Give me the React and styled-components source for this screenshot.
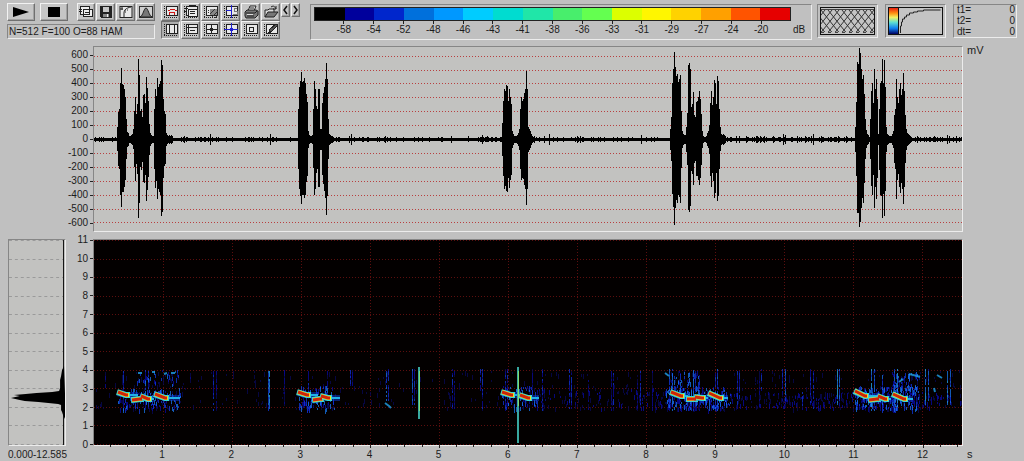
import React from 'react';
import styled, { createGlobalStyle } from 'styled-components';

const GlobalStyle = createGlobalStyle`
  body {
    margin: 0;
    background: #c0c0c0;
    color: #1c1c1c;
    font-family: "Liberation Sans", Arial, sans-serif;
    font-size: 10px;
    line-height: 14px;
  }
`;

const Toolbar = styled.header`
  display: flex;
  align-items: flex-start;
  padding: 3px 7px 0;
  height: 37px;
`;

const Sunken = styled.div`
  box-sizing: border-box;
  border: 1px solid;
  border-color: #868686 #ececec #ececec #868686;
`;

const Playback = styled.div`
  width: 148px;
  margin-right: 6px;
`;

const ButtonRow = styled.div`
  display: flex;
  gap: 1px;
`;

const ToolButton = styled.button`
  box-sizing: border-box;
  display: flex;
  align-items: center;
  justify-content: center;
  width: ${({ $wide }) => ($wide ? '28px' : '19px')};
  height: 18px;
  padding: 0;
  margin-right: ${({ $gap }) => $gap || 0}px;
  background: ${({ $pressed }) => ($pressed ? '#adadad' : '#c6c6c6')};
  border: 1px solid;
  border-color: ${({ $pressed }) =>
    $pressed ? '#707070 #eee #eee #707070' : '#f2f2f2 #707070 #707070 #f2f2f2'};
  box-shadow: ${({ $pressed }) => ($pressed ? 'none' : 'inset -1px -1px #a2a2a2')};

  svg {
    display: block;
    width: 16px;
    height: 14px;
  }
`;

const ArrowButton = styled(ToolButton)`
  width: 9px;
  height: 14px;

  svg {
    width: 7px;
    height: 10px;
  }
`;

const Status = styled(Sunken)`
  height: 15px;
  margin-top: 3px;
  padding-left: 1px;
  line-height: 13px;
  white-space: nowrap;
`;

const Tools = styled.div`
  display: flex;
  gap: 1px;
  margin-right: 10px;
`;

const ScalePanel = styled(Sunken)`
  flex: 1;
  height: 36px;
  margin: 1px 5px 0 0;
  padding: 2px 20px 0 3px;
`;

const ColorBar = styled.div`
  display: flex;
  height: 12px;
  border: 1px solid #222;
`;

const Swatch = styled.div`
  flex: 1;
  background: ${({ $color }) => $color};
`;

const ScaleLabels = styled.div`
  display: flex;
  margin-right: -20px;
`;

const ScaleLabel = styled.span`
  flex: 1;
  position: relative;
  display: flex;
  justify-content: center;
  padding-top: 2px;

  &::before {
    content: '';
    position: absolute;
    top: 0;
    width: 1px;
    height: 3px;
    background: #222;
  }
`;

const HalfStep = styled.span`
  flex: 0.5;
`;

const Unit = styled.span`
  width: 18px;
  padding: 2px 0 0 2px;
`;

const Preview = styled(Sunken)`
  width: 61px;
  height: 34px;
  margin: 1px 7px 0 0;
  padding: 2px;

  > svg {
    display: block;
    width: 100%;
    height: 100%;
  }
`;

const TimeTable = styled.table`
  box-sizing: border-box;
  width: 64px;
  height: 34px;
  margin-top: 1px;
  border: 1px solid;
  border-color: #868686 #ececec #ececec #868686;
  border-spacing: 0;
  line-height: 10px;

  th,
  td {
    padding: 0 1px 0 3px;
    font-weight: normal;
    text-align: left;
  }

  td {
    text-align: right;
  }
`;

const Charts = styled.main`
  display: grid;
  grid-template-columns: 66px 27px 1fr 61px;
  grid-template-rows: 186px 207px auto;
  row-gap: 7px;
  padding-top: 6px;
`;

const Axis = styled.div`
  display: flex;
  flex-direction: column;
  justify-content: space-between;
  align-items: flex-end;
  margin: ${({ $bleed }) => ($bleed ? '-6px 0' : '2px 0 3px')};
  grid-column: ${({ $wide }) => ($wide ? '1 / 3' : '2')};
`;

const AxisLabel = styled.span`
  display: flex;
  align-items: center;
  gap: 2px;

  &::after {
    content: '';
    width: 3px;
    height: 1px;
    background: #222;
  }
`;

const Panel = styled(Sunken)`
  background: ${({ $dark }) => ($dark ? '#030000' : '#c2c2c0')};
  margin-left: ${({ $inset }) => $inset || 0}px;
  min-width: 0;

  svg {
    display: block;
    width: 100%;
    height: 100%;
  }
`;

const RightUnit = styled.span`
  padding-left: 4px;
  margin-top: ${({ $axis }) => ($axis ? '-6px' : '-3px')};
  font-size: 11px;
`;

const Range = styled.div`
  padding-left: 8px;
  white-space: nowrap;
  grid-column: 1 / 3;
  margin-top: -5px;
`;

const TimeAxis = styled.div`
  margin-top: -8px;

  svg {
    display: block;
    width: 100%;
    height: 3px;
  }
`;

const TimeLabels = styled.div`
  display: flex;
`;

const TimeLabel = styled.span`
  flex: ${({ $span }) => $span || 1} 1 0;
  min-width: 0;
  text-align: center;
`;

const COLORS = [
  '#000', '#00009c', '#0026cc', '#0070dc', '#0098ff', '#00ccff', '#00dcd0', '#20e6a8',
  '#48ee6c', '#64ff50', '#dcff00', '#fff600', '#ffd200', '#ffa000', '#ff5400', '#e60000',
];
const LEVELS = [-58, -54, -52, -48, -46, -43, -41, -38, -36, -33, -31, -29, -27, -24, -20];

const WIDTH = 868;
const DURATION = 12.585;
const SECOND = WIDTH / DURATION;

// small seeded generator so that every render gives the same signal
const createRandom = (start) => {
  let seed = start;
  return () => {
    seed = (seed * 1664525 + 1013904223) % 4294967296;
    return seed / 4294967296;
  };
};

// first column of each call, then its amplitude column by column
const BURSTS = [
  [23, [12, 27, 30, 56, 71, 55, 54, 50, 42, 20, 7, 6, 3, 3, 4, 5, 10, 28, 42, 25, 35, 80, 64, 28, 30, 22, 44, 45, 36, 62, 51, 38, 15, 6, 4, 3, 3, 30, 50, 43, 61, 52, 55, 58, 79, 74, 40, 28, 25, 6, 4, 3, 4, 3, 4, 3]],
  [204, [30, 52, 58, 67, 57, 58, 61, 56, 45, 37, 8, 4, 3, 3, 4, 30, 58, 50, 33, 30, 50, 50, 10, 10, 36, 46, 52, 60, 76, 60, 20, 5, 4, 3, 3, 2]],
  [408, [16, 38, 50, 48, 54, 53, 38, 50, 42, 35, 8, 5, 3, 3, 3, 4, 6, 10, 30, 42, 38, 40, 46, 50, 68, 50, 12, 10, 8, 5, 3, 2, 3]],
  [576, [10, 22, 56, 70, 87, 72, 63, 65, 57, 60, 64, 28, 8, 5, 4, 4, 12, 26, 74, 76, 70, 32, 35, 47, 24, 22, 37, 38, 42, 48, 40, 25, 8, 3, 2, 2, 3, 6, 8, 14, 36, 48, 34, 42, 59, 56, 35, 63, 58, 30, 12, 5, 4, 5, 4, 3]],
  [761, [12, 37, 77, 75, 91, 86, 70, 60, 64, 45, 20, 9, 5, 4, 2, 20, 48, 56, 36, 70, 50, 60, 40, 5, 30, 56, 58, 80, 56, 79, 52, 12, 5, 4, 3, 3, 3, 5, 8, 24, 30, 60, 42, 36, 50, 56, 44, 50, 66, 48, 24, 10, 6, 5, 4, 3]],
];

const CLICKS = [90, 116, 176, 255, 257, 357, 388, 450, 455, 483, 486, 547, 601, 645, 689, 691, 717, 719, 744, 853, 855];

const buildWave = () => {
  const random = createRandom(7);
  const amp = Array.from({ length: WIDTH }, (_, x) => {
    const edge = x > 640 ? 1.4 : 1;
    return 0.7 + random() * random() * 2.2 * edge;
  });
  CLICKS.forEach((x) => {
    amp[x] = 3 + (x % 3);
  });
  BURSTS.forEach(([start, values]) => {
    values.forEach((value, i) => {
      amp[start + i] = Math.max(value, amp[start + i]);
    });
  });
  return amp
    .map((a, x) => {
      const top = Math.round(92 - a);
      const bottom = Math.round(93 + a * (0.94 + random() * 0.05));
      return `M${x} ${top}h1V${bottom}h-1z`;
    })
    .join('');
};

const STREAKS = [
  [11, 132, 148, 1], [29, 131, 170, 2], [51, 130, 170, 2], [54, 131, 168, 2], [96, 131, 145, 1],
  [119, 131, 170, 2], [122, 131, 170, 1], [139, 131, 140, 0], [160, 131, 142, 0], [174, 131, 170, 3], [175, 131, 170, 4],
  [190, 130, 165, 1], [214, 131, 170, 2], [233, 131, 168, 1], [256, 130, 145, 2], [258, 130, 145, 1],
  [292, 129, 160, 3], [294, 129, 160, 2], [318, 129, 165, 3], [320, 129, 165, 2], [358, 129, 170, 2],
  [360, 131, 170, 1], [386, 129, 150, 2], [388, 129, 170, 2], [411, 129, 170, 2], [413, 129, 160, 2],
  [438, 129, 165, 1], [448, 129, 170, 2], [475, 129, 168, 2], [477, 131, 165, 2], [494, 140, 170, 1],
  [517, 131, 170, 1], [519, 131, 170, 2], [543, 135, 170, 1], [546, 131, 165, 2], [558, 131, 170, 1],
  [575, 129, 170, 3], [578, 129, 170, 3], [599, 131, 170, 3], [601, 131, 170, 2], [605, 135, 170, 2],
  [621, 133, 170, 2], [623, 129, 170, 3], [643, 131, 168, 2], [645, 131, 160, 2], [665, 131, 165, 1],
  [667, 129, 150, 2], [688, 129, 160, 2], [691, 129, 160, 3], [708, 150, 170, 2], [716, 129, 165, 2],
  [719, 131, 168, 2], [743, 129, 165, 4], [745, 129, 160, 3], [777, 129, 170, 4], [780, 129, 170, 3],
  [788, 135, 172, 3], [800, 129, 170, 3], [803, 129, 170, 4], [831, 129, 165, 4], [834, 129, 160, 3],
  [853, 131, 165, 4], [856, 129, 165, 3],
];

// left, right, top, bottom, number of specks, brightest tone
const NOISE = [
  [24, 86, 148, 169, 190, 3], [43, 84, 130, 144, 50, 3], [204, 240, 146, 169, 130, 3],
  [408, 444, 146, 168, 100, 3], [571, 636, 146, 169, 260, 3], [575, 605, 130, 150, 70, 3],
  [761, 824, 146, 169, 260, 3], [797, 826, 132, 150, 70, 3], [546, 868, 152, 168, 380, 1],
  [640, 868, 130, 160, 90, 0], [0, 540, 131, 168, 190, 0], [438, 570, 148, 168, 80, 1],
];

const TONES = ['#080858', '#0a0aa4', '#1038e0', '#1878f0', '#28b0f8', '#48dcf4'];

const buildSpecks = () => {
  const random = createRandom(21);
  const paths = TONES.map(() => '');
  const add = (tone, x, y, h) => {
    paths[tone] += `M${Math.round(x)} ${Math.round(y)}h1v${h}h-1z`;
  };
  NOISE.forEach(([left, right, top, bottom, count, max]) => {
    for (let i = 0; i < count; i += 1) {
      const x = left + random() * (right - left);
      const y = top + random() * (bottom - top);
      add(Math.floor(random() * (max + 1)), x, y, 2 + Math.floor(random() * 4));
    }
  });
  STREAKS.forEach(([x, top, bottom, level]) => {
    for (let y = top; y < bottom; y += 2) {
      if (random() > 0.1) {
        add(Math.max(0, level - Math.floor(random() * 2.2)), x, y, 2);
      }
    }
  });
  return paths;
};

// core stroke of each syllable and the end of its fading tail
const CHIRPS = [
  [25, 153, 32, 155, 44], [39, 161, 46, 159, 47], [48, 157, 54, 159, 60], [62, 155, 71, 158, 86],
  [205, 153, 213, 155, 224], [220, 161, 226, 159, 228], [228, 157, 234, 158, 246],
  [409, 153, 417, 155, 425], [427, 156, 434, 158, 445],
  [578, 153, 587, 156, 594], [594, 160, 600, 159, 602], [602, 158, 608, 158, 614], [616, 154, 626, 158, 634],
  [762, 152, 771, 156, 784], [776, 161, 783, 159, 784], [785, 157, 791, 159, 797], [800, 155, 810, 159, 819],
];

const WAVE = buildWave();
const SPECKS = buildSpecks();

const Frame = ({ children }) => (
  <svg viewBox="0 0 16 14" shapeRendering="crispEdges" aria-hidden="true">
    <rect x="3.5" y="1.5" width="11" height="9" fill="#e8e8e8" stroke="#222" />
    <path d="M1.5 1v11M1 12.5h14" fill="none" stroke="#222" strokeDasharray="1 1" />
    {children}
  </svg>
);

const ICONS = {
  copy: (
    <svg viewBox="0 0 16 14" shapeRendering="crispEdges">
      <path d="M2.5 1.5h9v8h-9zM5.5 4.5h9v7h-9z" fill="#eee" stroke="#222" />
      <path d="M7 7.5h5M7 9.5h5M1 4.5h3M1 6.5h3" stroke="#222" />
    </svg>
  ),
  save: (
    <svg viewBox="0 0 16 14" shapeRendering="crispEdges">
      <path d="M2 1h12v12H3l-1-1z" fill="#222" />
      <path d="M5 2h6v5H5z" fill="#c8c8c8" />
      <path d="M5 9h6v3H5z" fill="#888" />
      <path d="M9 9h1v3H9z" fill="#eee" />
    </svg>
  ),
  curve: (
    <svg viewBox="0 0 16 14">
      <rect x="2" y="1.5" width="12" height="11" fill="#e8e8e8" stroke="#222" />
      <path d="M2 4h3M4 2v3M6 12V8c0-3 2-5 7-6" fill="none" stroke="#222" />
      <path d="M7 5h1M9 5h1M7 7h1" stroke="#222" />
    </svg>
  ),
  window: (
    <svg viewBox="0 0 16 14">
      <rect x="1.5" y="1.5" width="13" height="11" fill="#d0d0d0" stroke="#333" />
      <path d="M2 12C5 11 6 3 8 3s3 8 6 9z" fill="#777" stroke="#222" />
    </svg>
  ),
  region: (
    <Frame>
      <path d="M7 4.5h5M5 5.5h2M12 5.5h2M6 7.5h6M6.5 8v2M11.5 8v2" fill="none" stroke="#d01818" />
    </Frame>
  ),
  page: (
    <Frame>
      <path d="M5.5 4.5h9v7h-9z" fill="#eee" stroke="#222" />
      <path d="M1 3.5h4M1 6.5h3M7 6.5h5M7 8.5h5M6 0.5h7" fill="none" stroke="#222" />
    </Frame>
  ),
  hatch: (
    <Frame>
      <path d="M7 4h7v6H7z" fill="#888" />
      <path d="M7 9l5-5M9 12l6-6M5 5h1M5 7h1M12 13l3-3" stroke="#333" />
    </Frame>
  ),
  marker: (
    <Frame>
      <path d="M8.5 0v13M3 5.5h5" stroke="#2020d0" />
      <path d="M14 3.5h-3v3h3v3h-4" fill="none" stroke="#777" />
    </Frame>
  ),
  print: (
    <svg viewBox="0 0 16 14">
      <path d="M5 6l2-5h6l-2 5" fill="#eee" stroke="#222" />
      <path d="M2 7l2-2h9l2 1v4l-3 3H3l-1-2z" fill="#777" stroke="#222" />
      <path d="M3 8h9l2-2M4 11h7M7 3h4" stroke="#222" fill="none" />
      <path d="M4 9.5h6" stroke="#ddd" />
    </svg>
  ),
  open: (
    <svg viewBox="0 0 16 14">
      <path d="M2 12V5h3l1-1h5v3" fill="#ddd" stroke="#222" />
      <path d="M2 12l3-5h10l-4 5z" fill="#777" stroke="#222" />
      <path d="M8 2c3-2 4 0 5 2M13 1v3h-3" fill="none" stroke="#222" />
    </svg>
  ),
  columns: (
    <Frame>
      <path d="M6.5 1v10M11.5 1v10" stroke="#222" />
    </Frame>
  ),
  rows: (
    <Frame>
      <path d="M3 4.5h11M5.5 2v9M7 7.5h5" stroke="#222" />
    </Frame>
  ),
  cross: (
    <Frame>
      <path d="M8.5 1v10M4 6.5h10M7 5.5h3M7 7.5h3" stroke="#222" />
    </Frame>
  ),
  crossBlue: (
    <Frame>
      <path d="M8.5 0v13M1 6.5h14M7 5.5h3M7 7.5h3" stroke="#2020d0" />
    </Frame>
  ),
  box: (
    <Frame>
      <path d="M6.5 4.5h4v4h-4z" fill="none" stroke="#222" />
    </Frame>
  ),
  edit: (
    <Frame>
      <path d="M6 9l1-3 6-5 2 1-6 6z" fill="#555" stroke="#222" />
      <path d="M5 9.5h3" stroke="#222" />
    </Frame>
  ),
};

const MAIN_TOOLS = [['copy', 'Copy'], ['save', 'Save'], ['curve', 'Transfer curve'], ['window', 'Window']];

const VIEW_TOOLS = [
  [['region', 'Region'], ['page', 'Page'], ['hatch', 'Hatch'], ['marker', 'Marker'], ['print', 'Print'], ['open', 'Open']],
  [['columns', 'Columns'], ['rows', 'Rows'], ['cross', 'Crosshair'], ['crossBlue', 'Blue crosshair'], ['box', 'Box'], ['edit', 'Edit']],
];

const TIMES = [['t1=', 0], ['t2=', 0], ['dt=', 0]];

const range = (from, to, step) => {
  const values = [];
  for (let v = from; step > 0 ? v <= to : v >= to; v += step) {
    values.push(v);
  }
  return values;
};

const ColorScale = () => (
  <ScalePanel>
    <ColorBar>
      {COLORS.map((color) => (
        <Swatch key={color} $color={color} />
      ))}
    </ColorBar>
    <ScaleLabels>
      <HalfStep />
      {LEVELS.map((level) => (
        <ScaleLabel key={level}>{level}</ScaleLabel>
      ))}
      <HalfStep />
      <Unit>dB</Unit>
    </ScaleLabels>
  </ScalePanel>
);

const WindowPreview = () => (
  <Preview>
    <svg viewBox="0 0 55 28" preserveAspectRatio="none" aria-hidden="true">
      <rect x="0.5" y="0.5" width="54" height="27" fill="#c4c4c4" stroke="#111" />
      <path d="M1 2.5h53" stroke="#444" />
      <path d="M1 25.5h53" stroke="#444" strokeDasharray="3 4" />
      <svg x="1" y="3" width="53" height="22" viewBox="0 0 53 22">
        {range(-14, 53, 7).map((x) => (
          <path
            key={x}
            d={`M${x} 0L${x + 16} 20q1 2 2 2M${x} 22q1 0 2-2L${x + 18} 0`}
            fill="none"
            stroke="#333"
          />
        ))}
      </svg>
    </svg>
  </Preview>
);

const CurvePreview = () => (
  <Preview>
    <svg viewBox="0 0 55 28" preserveAspectRatio="none" aria-hidden="true">
      <defs>
        <linearGradient id="heat" x1="0" y1="0" x2="0" y2="1">
          <stop offset="0" stopColor="#e82010" />
          <stop offset="0.2" stopColor="#ff9010" />
          <stop offset="0.36" stopColor="#f4f060" />
          <stop offset="0.55" stopColor="#60e0d0" />
          <stop offset="0.78" stopColor="#1080f0" />
          <stop offset="1" stopColor="#000060" />
        </linearGradient>
      </defs>
      <rect x="0.5" y="0.5" width="54" height="27" fill="#c4c4c4" stroke="#111" />
      <rect x="1" y="1" width="9" height="26" fill="url(#heat)" />
      <path d="M10.5 1v26" stroke="#111" />
      <path
        d="M12.5 26v-7h1v-4h1v-3h2v-2h2v-2h3v-2h4v-1h4v-1h6v-1h17"
        fill="none"
        stroke="#222"
      />
    </svg>
  </Preview>
);

const Waveform = () => (
  <svg viewBox="0 0 868 184" preserveAspectRatio="none" shapeRendering="crispEdges" role="img" aria-label="Waveform">
    {range(-6, 6, 1).map((n) => (
      <path key={n} d={`M0 ${Math.round(92 + n * 13.9)}.5H868`} stroke="#b84040" strokeDasharray="1 2" />
    ))}
    <path d={WAVE} fill="#000" />
  </svg>
);

const Spectrogram = () => (
  <svg viewBox="0 0 868 205" preserveAspectRatio="none" role="img" aria-label="Spectrogram">
    <g stroke="#5c0e0e" strokeDasharray="1 2" shapeRendering="crispEdges">
      {range(0, 11, 1).map((f) => (
        <path key={f} d={`M0 ${Math.round(204 - f * 18.55)}.5H868`} />
      ))}
      {range(1, 12, 1).map((t) => (
        <path key={t} d={`M${Math.round(t * SECOND)}.5 0V205`} />
      ))}
    </g>
    {SPECKS.map((d, i) => (
      <path key={TONES[i]} d={d} fill={TONES[i]} opacity="0.75" />
    ))}
    <path d="M291 163l4 3 2 2M571 133l4 3M805 142l4-3M815 134l8 2 3 1M843 135l5 3M840 148l1 4M44 133h4M58 132h3M70 134l3-1M77 133h4" stroke="#20a0e8" strokeWidth="2" fill="none" opacity="0.8" />
    <g fill="none">
      {CHIRPS.map(([x1, y1, x2, y2, tail]) => (
        <g key={x1}>
          <path d={`M${x1 - 2} ${y1}L${x2} ${y2}H${tail}`} stroke="#1040d8" strokeWidth="6" opacity="0.5" />
          <path d={`M${x2} ${y2}H${tail}`} stroke="#20b0e8" strokeWidth="2" />
          <path d={`M${x1 - 2} ${y1 - 1}L${x2} ${y2}h4`} stroke="#38d8d0" strokeWidth="6" />
          <path d={`M${x1 - 1} ${y1 - 1}L${x2} ${y2}h3`} stroke="#f0d828" strokeWidth="4" />
        </g>
      ))}
      {CHIRPS.map(([x1, y1, x2, y2]) => (
        <path key={x1} d={`M${x1 - 1} ${y1 - 1}L${x2} ${y2}h2`} stroke="#cc2408" strokeWidth="3" />
      ))}
    </g>
    <path d="M324 127h2v52h-2zM423 127h2v76h-2z" fill="#38a8a0" />
    <path d="M325 131h1v40h-1zM424 131h1v35h-1z" fill="#80dc70" />
  </svg>
);

const Spectrum = () => (
  <svg viewBox="0 0 57 205" preserveAspectRatio="none" role="img" aria-label="Average spectrum">
    {range(0, 11, 1).map((f) => (
      <path key={f} d={`M0 ${Math.round(204 - f * 18.55)}.5H55`} stroke="#999" strokeDasharray="3 3" />
    ))}
    <path d="M55 0h1v205h-1z" fill="#111" />
    <path
      d="M56 126l-2 4-1 6-1 4v8l-1 3-7 1-16 1-11 1-12 1 6 1-9 2 9 2 5 1 14 1 10 1 10 1 3 1v5l1 2 1 3 3 6z"
      fill="#000"
    />
  </svg>
);

const App = () => (
  <>
    <GlobalStyle />
    <Toolbar>
      <Playback>
        <ButtonRow>
          <ToolButton $wide $gap={4} aria-label="Play">
            <svg viewBox="0 0 16 14">
              <path d="M0 2l16 5-16 5z" />
            </svg>
          </ToolButton>
          <ToolButton $wide $gap={8} aria-label="Stop">
            <svg viewBox="0 0 16 14">
              <path d="M2 2h12v10H2z" />
            </svg>
          </ToolButton>
          {MAIN_TOOLS.map(([icon, label]) => (
            <ToolButton key={icon} aria-label={label}>
              {ICONS[icon]}
            </ToolButton>
          ))}
        </ButtonRow>
        <Status>N=512 F=100 O=88 HAM</Status>
      </Playback>
      <Tools>
        <div>
          {VIEW_TOOLS.map((row) => (
            <ButtonRow key={row[0][0]}>
              {row.map(([icon, label]) => (
                <ToolButton key={icon} $pressed={icon === 'columns'} aria-label={label}>
                  {ICONS[icon]}
                </ToolButton>
              ))}
            </ButtonRow>
          ))}
        </div>
        <ButtonRow>
          <ArrowButton aria-label="Previous">
            <svg viewBox="0 0 7 10">
              <path d="M5 1L2 5l3 4" fill="none" stroke="#111" strokeWidth="1.5" />
            </svg>
          </ArrowButton>
          <ArrowButton aria-label="Next">
            <svg viewBox="0 0 7 10">
              <path d="M2 1l3 4-3 4" fill="none" stroke="#111" strokeWidth="1.5" />
            </svg>
          </ArrowButton>
        </ButtonRow>
      </Tools>
      <ColorScale />
      <WindowPreview />
      <CurvePreview />
      <TimeTable>
        <tbody>
          {TIMES.map(([name, value]) => (
            <tr key={name}>
              <th scope="row">{name}</th>
              <td>{value}</td>
            </tr>
          ))}
        </tbody>
      </TimeTable>
    </Toolbar>

    <Charts>
      <Axis $wide>
        {range(600, -600, -100).map((value) => (
          <AxisLabel key={value}>{value}</AxisLabel>
        ))}
      </Axis>
      <Panel>
        <Waveform />
      </Panel>
      <RightUnit>mV</RightUnit>

      <Panel $inset={8}>
        <Spectrum />
      </Panel>
      <Axis $bleed>
        {range(11, 0, -1).map((value) => (
          <AxisLabel key={value}>{value}</AxisLabel>
        ))}
      </Axis>
      <Panel $dark>
        <Spectrogram />
      </Panel>
      <span />

      <Range>0.000-12.585</Range>
      <TimeAxis>
        <svg viewBox="0 0 868 3" preserveAspectRatio="none" shapeRendering="crispEdges" aria-hidden="true">
          {range(1, 50, 1).map((n) => (
            <path key={n} d={`M${Math.round((n * SECOND) / 4)}.5 0v${n % 4 ? 2 : 3}`} stroke="#222" />
          ))}
        </svg>
        <TimeLabels>
          <TimeLabel $span={0.5} />
          {range(1, 12, 1).map((value) => (
            <TimeLabel key={value}>{value}</TimeLabel>
          ))}
          <TimeLabel $span={0.085} />
        </TimeLabels>
      </TimeAxis>
      <RightUnit $axis>s</RightUnit>
    </Charts>
  </>
);

export default App;
